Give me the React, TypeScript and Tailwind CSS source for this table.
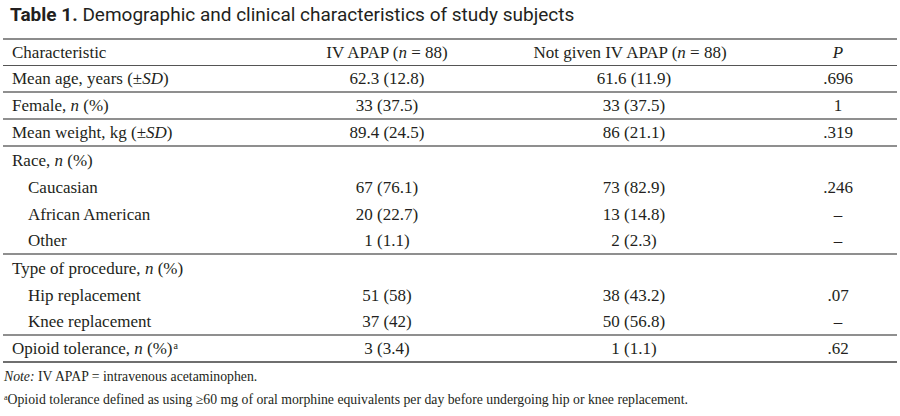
import React from "react";

type Row = {
  label: React.ReactNode;
  a: string;
  b: string;
  p: string;
  indent?: boolean;
  border?: "thin" | "thick" | "none";
};

const n = <i>n</i>;

const rows: Row[] = [
  { label: <>Mean age, years (±<i>SD</i>)</>, a: "62.3 (12.8)", b: "61.6 (11.9)", p: ".696", border: "thick" },
  { label: <>Female, {n} (%)</>, a: "33 (37.5)", b: "33 (37.5)", p: "1", border: "thick" },
  { label: <>Mean weight, kg (±<i>SD</i>)</>, a: "89.4 (24.5)", b: "86 (21.1)", p: ".319", border: "thick" },
  { label: <>Race, {n} (%)</>, a: "", b: "", p: "", border: "none" },
  { label: "Caucasian", a: "67 (76.1)", b: "73 (82.9)", p: ".246", indent: true, border: "none" },
  { label: "African American", a: "20 (22.7)", b: "13 (14.8)", p: "–", indent: true, border: "none" },
  { label: "Other", a: "1 (1.1)", b: "2 (2.3)", p: "–", indent: true, border: "thick" },
  { label: <>Type of procedure, {n} (%)</>, a: "", b: "", p: "", border: "none" },
  { label: "Hip replacement", a: "51 (58)", b: "38 (43.2)", p: ".07", indent: true, border: "none" },
  { label: "Knee replacement", a: "37 (42)", b: "50 (56.8)", p: "–", indent: true, border: "thick" },
  {
    label: (
      <>
        Opioid tolerance, {n} (%)<sup className="text-[10px] ml-[1px]">a</sup>
      </>
    ),
    a: "3 (3.4)",
    b: "1 (1.1)",
    p: ".62",
    border: "thin",
  },
];

function TRow({ r }: { r: Row }) {
  const borderCls =
    r.border === "thick"
      ? "h-[27px] border-b-[2px] border-[#8f8f8f]"
      : r.border === "thin"
      ? "h-[27px] border-b-[2px] border-[#6f6f6f]"
      : "h-[27px]";
  return (
    <div className={`grid grid-cols-[290px_188px_298px_118px] items-center ${borderCls}`}>
      <div className={r.indent ? "pl-[25px]" : "pl-[9px]"}>{r.label}</div>
      <div className="text-center">{r.a}</div>
      <div className="text-center pl-[8px]">{r.b}</div>
      <div className="text-center">{r.p}</div>
    </div>
  );
}

export default function App() {
  return (
    <div className="w-[900px] h-[416px] bg-white text-[#231f20] overflow-hidden">
      <div
        className="pl-[10px] pt-[3px] h-[38px] text-[19px] leading-[24px] text-[#231f20]"
        style={{ fontFamily: "Roboto, 'Liberation Sans', sans-serif" }}
      >
        <span className="font-bold">Table 1.</span> Demographic and clinical characteristics of study subjects
      </div>
      <div
        className="ml-[3px] w-[894px] text-[17px] leading-[20px]"
        style={{ fontFamily: "'Liberation Serif', 'Times New Roman', serif" }}
      >
        <div className="h-[2px] bg-[#8c8c8c]" />
        <div className="grid grid-cols-[290px_188px_298px_118px] items-center h-[26px] border-b border-[#555]">
          <div className="pl-[9px]">Characteristic</div>
          <div className="text-center">
            IV APAP (<i>n</i> = 88)
          </div>
          <div className="text-center">
            Not given IV APAP (<i>n</i> = 88)
          </div>
          <div className="text-center">
            <i>P</i>
          </div>
        </div>
        {rows.map((r, i) => (
          <TRow key={i} r={r} />
        ))}
        <div className="text-[13.75px] leading-[16px] pt-[6px] pl-[1px]">
          <div className="h-[23px]">
            <i>Note:</i> IV APAP = intravenous acetaminophen.
          </div>
          <div>
            <sup className="text-[8px]">a</sup>Opioid tolerance defined as using ≥60 mg of oral morphine equivalents per day before undergoing hip or knee replacement.
          </div>
        </div>
      </div>
    </div>
  );
}
